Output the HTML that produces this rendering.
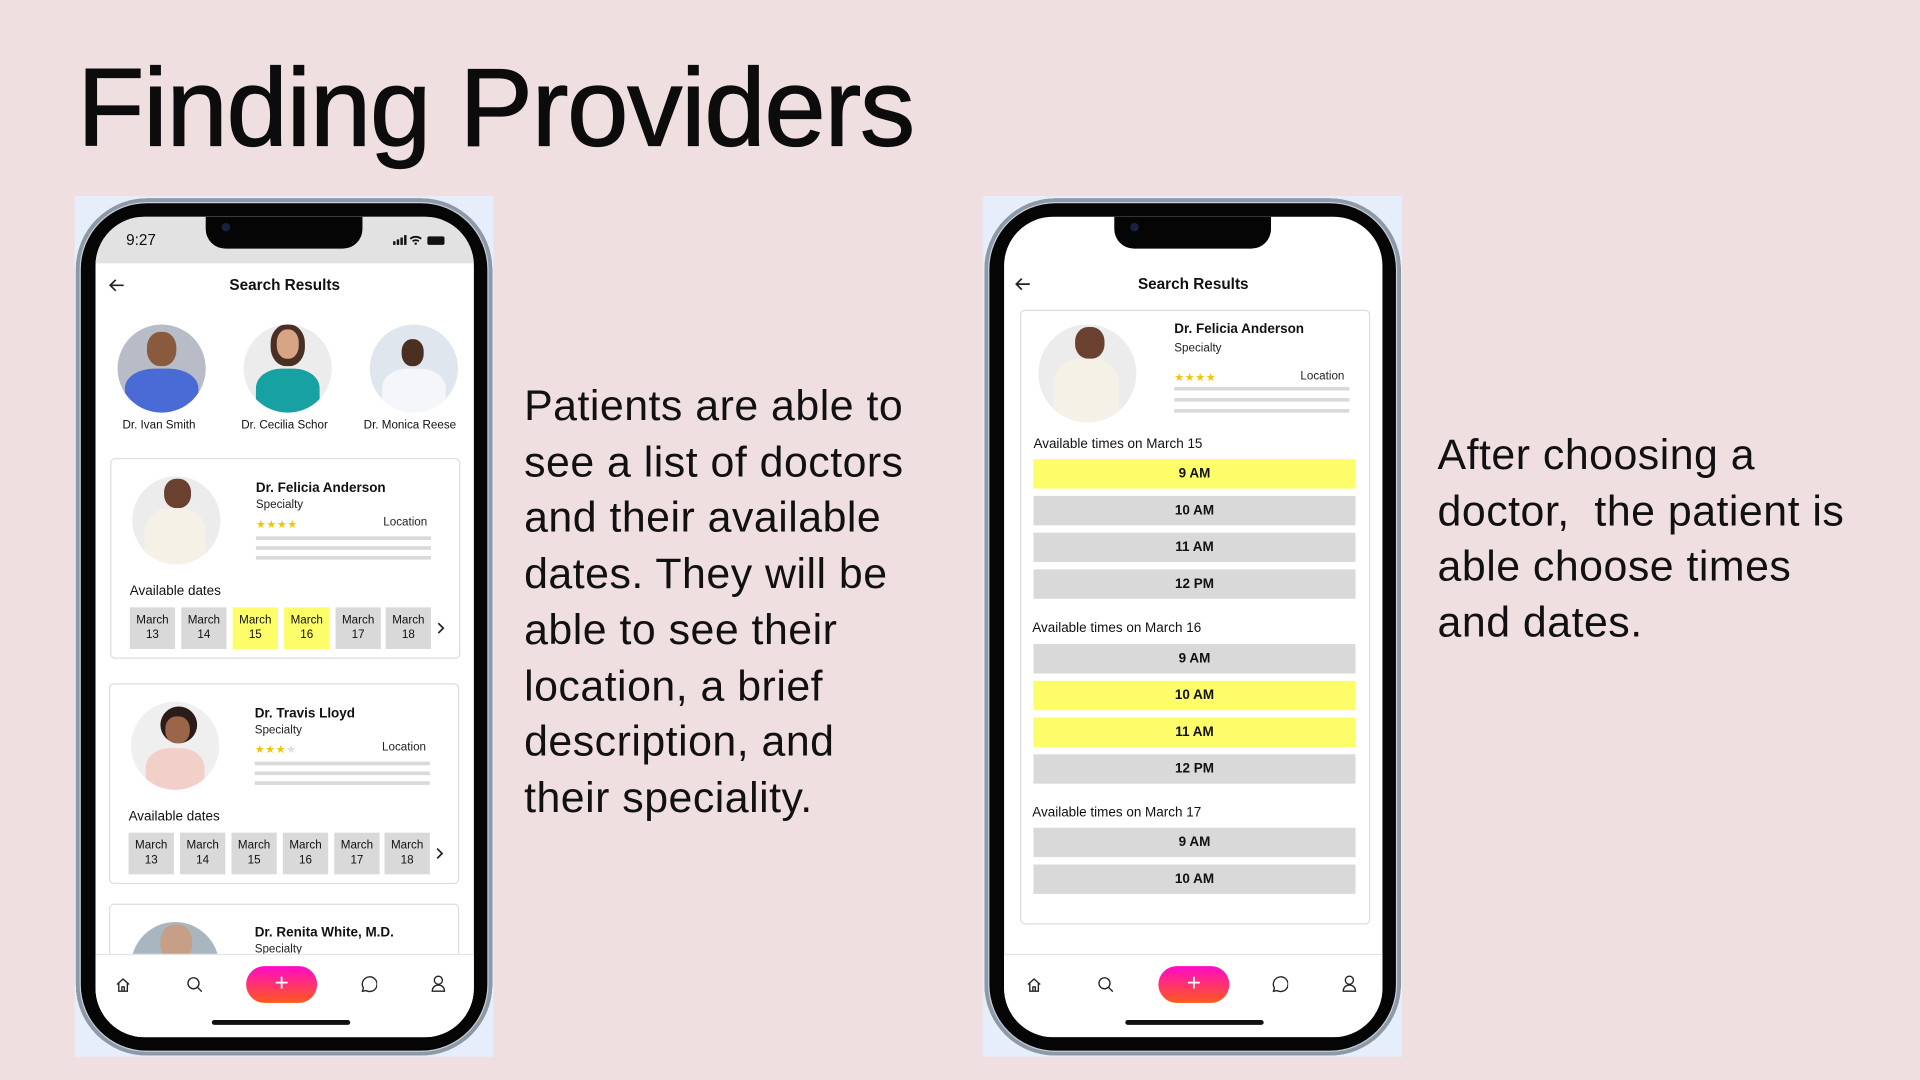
<!DOCTYPE html>
<html><head><meta charset="utf-8">
<style>
*{margin:0;padding:0;box-sizing:border-box}
html,body{width:1920px;height:1080px;overflow:hidden;background:#efdfe0}
#w{position:absolute;left:0;top:0;width:1568px;height:882px;transform:scale(1.22449);transform-origin:0 0;font-family:"Liberation Sans",sans-serif;color:#111}
.a{position:absolute}
h1{position:absolute;left:63px;top:38px;font-size:90px;font-weight:400;letter-spacing:-1px;color:#0c0c0c;white-space:nowrap;-webkit-text-stroke:1px #0c0c0c}
.p{position:absolute;font-size:35px;line-height:45.7px;letter-spacing:0.4px;color:#111;white-space:nowrap}
.bgr{position:absolute;background:#e6eefb;width:342px;height:703px;top:160px}
.frame{position:absolute;width:340px;height:700px;top:162px;border-radius:58px;background:#050505;box-shadow:inset 0 0 0 3px #8d99a6,inset 0 0 0 4px #c7d0da}
.scr{position:absolute;width:309px;height:670px;top:177px;border-radius:40px;background:#fff;overflow:hidden}
.notch{position:absolute;left:90px;top:0;width:128px;height:26px;background:#050505;border-radius:0 0 16px 16px}
.cam{position:absolute;left:13px;top:5px;width:7px;height:7px;border-radius:50%;background:#1a2040}
.t{position:absolute;white-space:nowrap}
.hd{font-size:12.5px;font-weight:700}
.card{position:absolute;border:1.3px solid #ddd;border-radius:4px;background:#fff}
.av{position:absolute;border-radius:50%;overflow:hidden}
.nm{font-size:11px;font-weight:700}
.sp{font-size:9.5px;color:#222}
.st{font-size:9px;color:#f2c500;letter-spacing:0.5px}
.ln{position:absolute;height:3px;background:#d9d9d9}
.db{position:absolute;width:37px;height:34px;background:#d9d9d9;font-size:9.5px;text-align:center;line-height:12px;padding-top:5px;color:#111}
.sl{position:absolute;left:10px;width:263px;height:24px;background:#d9d9d9;font-size:11px;font-weight:700;text-align:center;line-height:24px}
.db.y,.sl.y{background:#fdfd6a}
.nav{position:absolute;left:0;top:602px;width:309px;height:68px;background:#fff;border-top:1px solid #e4e4e4}
.plus{position:absolute;top:9px;width:58px;height:30px;border-radius:15px;background:linear-gradient(#ff0ac8,#ff5a1c);color:#fff;font-size:20px;text-align:center;line-height:29px;font-weight:300}
.bar{position:absolute;top:656px;width:113px;height:4px;border-radius:2px;background:#111}
</style></head><body><div id="w">
<h1>Finding Providers</h1>

<div class="p" style="left:428px;top:309px">Patients are able to<br>see a list of doctors<br>and their available<br>dates. They will be<br>able to see their<br>location, a brief<br>description, and<br>their speciality.</div>
<div class="p" style="left:1174px;top:349px">After choosing a<br>doctor,&nbsp; the patient is<br>able choose times<br>and dates.</div>

<!-- PHONE 1 -->
<div class="bgr" style="left:61px"></div>
<div class="frame" style="left:62px"></div>
<div class="scr" style="left:78px">
 <div class="a" style="left:0;top:0;width:309px;height:38px;background:#e2e2e2"></div>
 <div class="notch"><div class="cam"></div></div>
 <div class="t" style="left:25px;top:12px;font-size:12.5px">9:27</div>
 <svg class="a" style="left:243px;top:14px" width="45" height="10" viewBox="0 0 45 10"><rect x="0" y="6" width="2" height="3" fill="#111"/><rect x="3" y="4.5" width="2" height="4.5" fill="#111"/><rect x="6" y="3" width="2" height="6" fill="#111"/><rect x="9" y="1" width="2" height="8" fill="#111"/><path d="M14 4a7 7 0 0 1 9 0M16 6a4 4 0 0 1 5 0" stroke="#111" stroke-width="1.5" fill="none"/><circle cx="18.5" cy="8" r="1" fill="#111"/><rect x="28" y="2" width="14" height="7" rx="1.5" fill="#111"/></svg>
 <svg class="a" style="left:10px;top:50px" width="14" height="12" viewBox="0 0 14 12"><path d="M13 6H2M6.5 1.5 2 6l4.5 4.5" stroke="#222" stroke-width="1.4" fill="none"/></svg>
 <div class="t hd" style="left:0;width:309px;text-align:center;top:49px">Search Results</div>
 <div class="av" style="left:18px;top:88px;width:72px;height:72px;background:#b7bcc6"><div class="a" style="left:24px;top:6px;width:24px;height:28px;border-radius:45%;background:#8a5a3e"></div><div class="a" style="left:6px;top:36px;width:60px;height:40px;border-radius:40% 40% 0 0;background:#4a6bd6"></div></div>
 <div class="av" style="left:121px;top:88px;width:72px;height:72px;background:#ececec"><div class="a" style="left:22px;top:0;width:28px;height:34px;border-radius:45%;background:#4a3024"></div><div class="a" style="left:27px;top:4px;width:18px;height:24px;border-radius:45%;background:#d7a486"></div><div class="a" style="left:10px;top:36px;width:52px;height:40px;border-radius:40% 40% 0 0;background:#17a1a3"></div></div>
 <div class="av" style="left:224px;top:88px;width:72px;height:72px;background:#dfe6ee"><div class="a" style="left:26px;top:12px;width:18px;height:22px;border-radius:45%;background:#4b3022"></div><div class="a" style="left:10px;top:36px;width:52px;height:40px;border-radius:40% 40% 0 0;background:#f4f6fa"></div></div>
 <div class="t" style="left:22px;top:165px;font-size:9.5px">Dr. Ivan Smith</div>
 <div class="t" style="left:119px;top:165px;font-size:9.5px">Dr. Cecilia Schor</div>
 <div class="t" style="left:219px;top:165px;font-size:9.5px">Dr. Monica Reese</div>
 <div class="card" style="left:12px;top:197px;width:286px;height:164px">
  <div class="av" style="left:17px;top:14px;width:72px;height:72px;background:#ececec"><div class="a" style="left:26px;top:2px;width:22px;height:24px;border-radius:45%;background:#6a4030"></div><div class="a" style="left:10px;top:26px;width:50px;height:50px;border-radius:40% 40% 0 0;background:#f6f1e6"></div></div>
  <div class="t nm" style="left:118px;top:18px">Dr. Felicia Anderson</div>
  <div class="t sp" style="left:118px;top:32px">Specialty</div>
  <div class="t st" style="left:118px;top:48px">★★★★</div>
  <div class="t sp" style="left:222px;top:46px">Location</div>
  <div class="ln" style="left:118px;top:63px;width:143px"></div><div class="ln" style="left:118px;top:71px;width:143px"></div><div class="ln" style="left:118px;top:79px;width:143px"></div>
  <div class="t" style="left:15px;top:102px;font-size:11px">Available dates</div>
  <div class="db" style="left:15px;top:121px">March<br>13</div>
  <div class="db" style="left:57px;top:121px">March<br>14</div>
  <div class="db y" style="left:99px;top:121px">March<br>15</div>
  <div class="db y" style="left:141px;top:121px">March<br>16</div>
  <div class="db" style="left:183px;top:121px">March<br>17</div>
  <div class="db" style="left:224px;top:121px">March<br>18</div>
  <svg class="a" style="left:265px;top:133px" width="8" height="10"><path d="M2 1l4 4-4 4" stroke="#222" stroke-width="1.4" fill="none"/></svg>
 </div>
 <div class="card" style="left:11px;top:381px;width:286px;height:164px">
  <div class="av" style="left:17px;top:14px;width:72px;height:72px;background:#efefef"><div class="a" style="left:24px;top:4px;width:30px;height:30px;border-radius:50%;background:#2a1c16"></div><div class="a" style="left:28px;top:12px;width:20px;height:22px;border-radius:45%;background:#9a6548"></div><div class="a" style="left:12px;top:38px;width:48px;height:40px;border-radius:40% 40% 0 0;background:#f2cfc8"></div></div>
  <div class="t nm" style="left:118px;top:18px">Dr. Travis Lloyd</div>
  <div class="t sp" style="left:118px;top:32px">Specialty</div>
  <div class="t st" style="left:118px;top:48px">★★★<span style="color:#ddd">★</span></div>
  <div class="t sp" style="left:222px;top:46px">Location</div>
  <div class="ln" style="left:118px;top:63px;width:143px"></div><div class="ln" style="left:118px;top:71px;width:143px"></div><div class="ln" style="left:118px;top:79px;width:143px"></div>
  <div class="t" style="left:15px;top:102px;font-size:11px">Available dates</div>
  <div class="db" style="left:15px;top:121px">March<br>13</div>
  <div class="db" style="left:57px;top:121px">March<br>14</div>
  <div class="db" style="left:99px;top:121px">March<br>15</div>
  <div class="db" style="left:141px;top:121px">March<br>16</div>
  <div class="db" style="left:183px;top:121px">March<br>17</div>
  <div class="db" style="left:224px;top:121px">March<br>18</div>
  <svg class="a" style="left:265px;top:133px" width="8" height="10"><path d="M2 1l4 4-4 4" stroke="#222" stroke-width="1.4" fill="none"/></svg>
 </div>
 <div class="card" style="left:11px;top:561px;width:286px;height:120px">
  <div class="av" style="left:17px;top:14px;width:72px;height:72px;background:#a9b6bf"><div class="a" style="left:24px;top:2px;width:26px;height:30px;border-radius:45%;background:#c79f86"></div></div>
  <div class="t nm" style="left:118px;top:17px">Dr. Renita White, M.D.</div>
  <div class="t sp" style="left:118px;top:31px">Specialty</div>
 </div>
 <div class="nav">
  <svg class="a" style="left:16px;top:18px" width="13" height="13" viewBox="0 0 13 13"><path d="M1.5 6L6.5 1.5 11.5 6M3 5v6.5h7V5M5.5 11.5V8h2v3.5" stroke="#222" stroke-width="1.1" fill="none"/></svg>
  <svg class="a" style="left:74px;top:17px" width="14" height="14" viewBox="0 0 14 14"><circle cx="6" cy="6" r="4.5" stroke="#222" stroke-width="1.1" fill="none"/><path d="M9.3 9.3l3.5 3.5" stroke="#222" stroke-width="1.1"/></svg>
  <div class="plus" style="left:123px">+</div>
  <svg class="a" style="left:215px;top:17px" width="15" height="15" viewBox="0 0 15 15"><path d="M3 12.5l.8-2.6A6 6 0 1 1 6 12l-3 .5z" stroke="#222" stroke-width="1.1" fill="none"/></svg>
  <svg class="a" style="left:274px;top:16px" width="12" height="15" viewBox="0 0 12 15"><circle cx="6" cy="4.5" r="3.3" stroke="#222" stroke-width="1.1" fill="none"/><path d="M1 13.5c0-3 2.2-5 5-5s5 2 5 5z" stroke="#222" stroke-width="1.1" fill="none"/></svg>
 </div>
 <div class="bar" style="left:95px"></div>
</div>

<!-- PHONE 2 -->
<div class="bgr" style="left:803px"></div>
<div class="frame" style="left:804px"></div>
<div class="scr" style="left:820px">
 <div class="notch"><div class="cam"></div></div>
 <svg class="a" style="left:8px;top:49px" width="14" height="12" viewBox="0 0 14 12"><path d="M13 6H2M6.5 1.5 2 6l4.5 4.5" stroke="#222" stroke-width="1.4" fill="none"/></svg>
 <div class="t hd" style="left:0;width:309px;text-align:center;top:48px">Search Results</div>
 <div class="card" style="left:13px;top:76px;width:286px;height:502px">
  <div class="av" style="left:14px;top:11px;width:80px;height:80px;background:#ececec"><div class="a" style="left:30px;top:2px;width:24px;height:26px;border-radius:45%;background:#6a4030"></div><div class="a" style="left:12px;top:28px;width:54px;height:54px;border-radius:40% 40% 0 0;background:#f6f1e6"></div></div>
  <div class="t nm" style="left:125px;top:9px">Dr. Felicia Anderson</div>
  <div class="t sp" style="left:125px;top:25px">Specialty</div>
  <div class="t st" style="left:125px;top:49px">★★★★</div>
  <div class="t sp" style="left:228px;top:48px">Location</div>
  <div class="ln" style="left:125px;top:62px;width:143px"></div><div class="ln" style="left:125px;top:71px;width:143px"></div><div class="ln" style="left:125px;top:80px;width:143px"></div>
  <div class="t" style="left:10px;top:103px;font-size:11px">Available times on March 15</div>
  <div class="sl y" style="top:121px">9 AM</div>
  <div class="sl" style="top:151px">10 AM</div>
  <div class="sl" style="top:181px">11 AM</div>
  <div class="sl" style="top:211px">12 PM</div>
  <div class="t" style="left:9px;top:253px;font-size:11px">Available times on March 16</div>
  <div class="sl" style="top:272px">9 AM</div>
  <div class="sl y" style="top:302px">10 AM</div>
  <div class="sl y" style="top:332px">11 AM</div>
  <div class="sl" style="top:362px">12 PM</div>
  <div class="t" style="left:9px;top:404px;font-size:11px">Available times on March 17</div>
  <div class="sl" style="top:422px">9 AM</div>
  <div class="sl" style="top:452px">10 AM</div>
 </div>
 <div class="nav">
  <svg class="a" style="left:18px;top:18px" width="13" height="13" viewBox="0 0 13 13"><path d="M1.5 6L6.5 1.5 11.5 6M3 5v6.5h7V5M5.5 11.5V8h2v3.5" stroke="#222" stroke-width="1.1" fill="none"/></svg>
  <svg class="a" style="left:76px;top:17px" width="14" height="14" viewBox="0 0 14 14"><circle cx="6" cy="6" r="4.5" stroke="#222" stroke-width="1.1" fill="none"/><path d="M9.3 9.3l3.5 3.5" stroke="#222" stroke-width="1.1"/></svg>
  <div class="plus" style="left:126px">+</div>
  <svg class="a" style="left:217px;top:17px" width="15" height="15" viewBox="0 0 15 15"><path d="M3 12.5l.8-2.6A6 6 0 1 1 6 12l-3 .5z" stroke="#222" stroke-width="1.1" fill="none"/></svg>
  <svg class="a" style="left:276px;top:16px" width="12" height="15" viewBox="0 0 12 15"><circle cx="6" cy="4.5" r="3.3" stroke="#222" stroke-width="1.1" fill="none"/><path d="M1 13.5c0-3 2.2-5 5-5s5 2 5 5z" stroke="#222" stroke-width="1.1" fill="none"/></svg>
 </div>
 <div class="bar" style="left:99px"></div>
</div>
</div></body></html>
